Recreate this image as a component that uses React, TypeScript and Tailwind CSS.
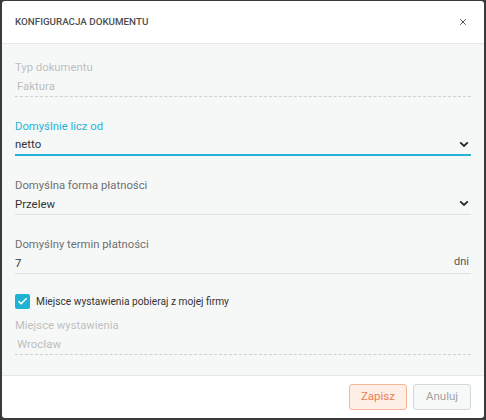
import { Check, X } from "lucide-react";

const Chevron = () => (
    <svg width="10" height="7" viewBox="0 0 10 7" className="shrink-0">
        <path d="M1.2 1.4 L5 5 L8.8 1.4" fill="none" stroke="#2b2b2b" strokeWidth="1.9" />
    </svg>
);

type FieldProps = {
    label: string;
    value: string;
    variant?: "disabled" | "focused" | "normal";
    suffix?: React.ReactNode;
};

const Field = ({ label, value, variant = "normal", suffix }: FieldProps) => {
    const labelClass =
        variant === "disabled" ? "text-[#bfbfbf]" : variant === "focused" ? "text-[#27b3d3]" : "text-[#6f6f6f]";
    const valueClass = variant === "disabled" ? "text-[#bdbdbd] pl-[2px]" : "text-[#333]";
    const lineClass =
        variant === "disabled"
            ? "h-[22px] border-b border-dashed border-[#cfcfcf]"
            : variant === "focused"
              ? "h-[22px] border-b-2 border-[#27b3d3]"
              : "h-[22px] border-b border-[#e0e2e2]";
    return (
        <div className="flex flex-col">
            <div className={`h-[14px] text-[11.3px] leading-[14px] ${labelClass}`}>{label}</div>
            <div className={`flex items-center justify-between pr-[2px] ${lineClass}`}>
                <span className={`text-[11.4px] leading-[20px] ${valueClass}`}>{value}</span>
                {suffix}
            </div>
        </div>
    );
};

export default function App() {
    return (
        <div
            className="w-[486px] h-[420px] bg-[#3a3a3a] pt-[1px] pl-[2px] pr-[2px] pb-[2px]"
            style={{ fontFamily: "Roboto, 'Liberation Sans', sans-serif" }}
        >
            <div className="flex h-full flex-col overflow-hidden rounded-[3px] bg-white">
                {/* header */}
                <div className="flex h-[43px] shrink-0 items-center justify-between border-b border-[#e6e8e8] pl-[13px] pr-[16px]">
                    <h1 className="text-[9.8px] font-medium text-[#505050]">KONFIGURACJA DOKUMENTU</h1>
                    <X size={10} strokeWidth={2.4} color="#555" />
                </div>

                {/* body */}
                <div className="flex flex-1 flex-col bg-[#f6f8f8] px-[13px] pt-[17px]">
                    <div className="flex flex-col gap-[23px]">
                        <Field label="Typ dokumentu" value="Faktura" variant="disabled" />
                        <Field label="Domyślnie licz od" value="netto" variant="focused" suffix={<Chevron />} />
                        <Field label="Domyślna forma płatności" value="Przelew" suffix={<Chevron />} />
                        <Field
                            label="Domyślny termin płatności"
                            value="7"
                            suffix={<span className="text-[11px] text-[#555]">dni</span>}
                        />
                    </div>

                    <label className="mt-[20px] flex items-center gap-[6px]">
                        <span className="flex h-[15px] w-[15px] items-center justify-center rounded-[2px] bg-[#1fb3d3]">
                            <Check size={11} strokeWidth={3.5} color="white" />
                        </span>
                        <span className="text-[10.2px] text-[#333]">Miejsce wystawienia pobieraj z mojej firmy</span>
                    </label>

                    <div className="mt-[10px]">
                        <Field label="Miejsce wystawienia" value="Wrocław" variant="disabled" />
                    </div>
                </div>

                {/* footer */}
                <div className="flex h-[43px] shrink-0 items-center justify-end gap-[6px] border-t border-[#e6e8e8] pr-[13px]">
                    <button className="h-[26px] w-[58px] rounded-[3px] border border-[#f7b798] bg-[#fdeee6] text-[11.5px] text-[#ee7c52]">
                        Zapisz
                    </button>
                    <button className="h-[26px] w-[58px] rounded-[3px] border border-[#d3d9da] bg-[#f7f9f9] text-[11.5px] text-[#a2a2a2]">
                        Anuluj
                    </button>
                </div>
            </div>
        </div>
    );
}
